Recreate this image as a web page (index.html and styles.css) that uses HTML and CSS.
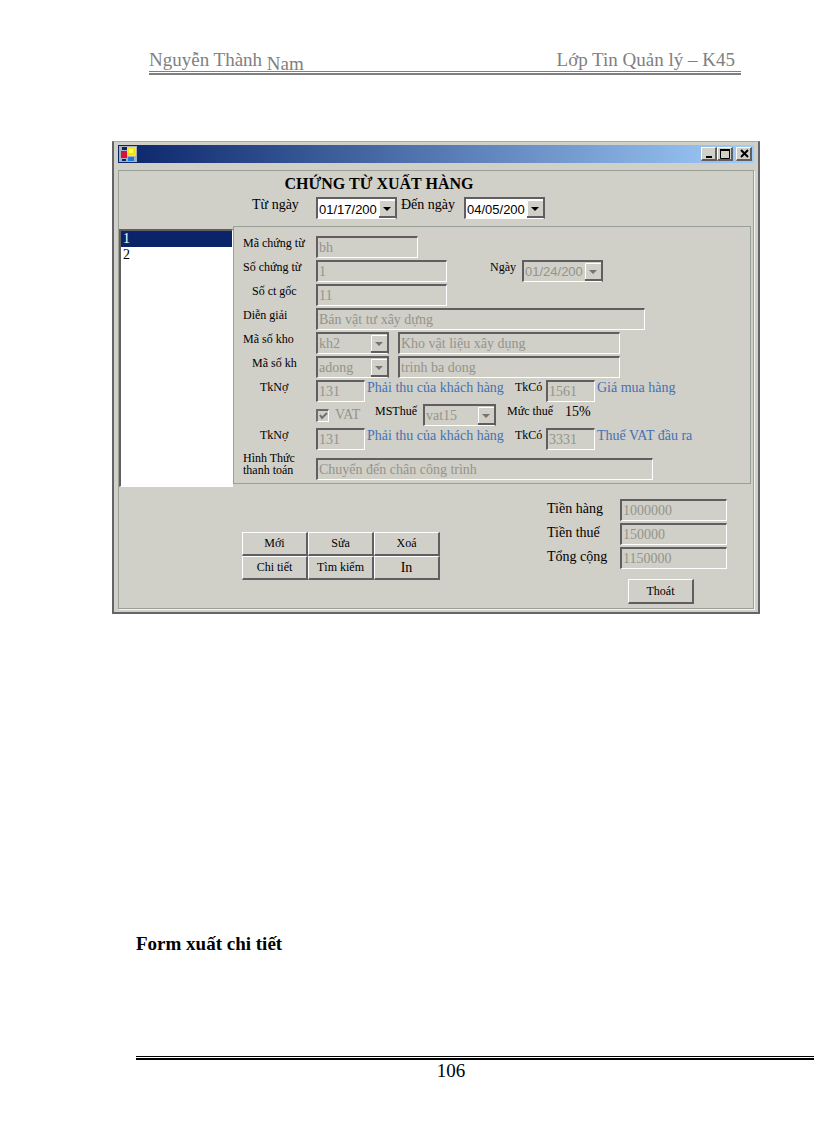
FILE: index.html
```
<!DOCTYPE html>
<html lang="vi">
<head>
    <meta charset="UTF-8">
    <meta name="viewport" content="width=device-width, initial-scale=1.0">
    <title>Chứng từ xuất hàng</title>
    <link rel="stylesheet" href="styles.css">
</head>
<body>
    <header class="page-header">
        <div class="page-header-text">
            <span>Nguyễn Thành <span class="lowered">Nam</span></span>
            <span>Lớp Tin Quản lý – K45</span>
        </div>
        <div class="rule"></div>
    </header>

    <main>
        <div class="window">
            <div class="title-bar">
                <svg class="app-icon" width="18" height="16" viewBox="0 0 18 16">
                    <rect width="18" height="16" fill="#a8b0bc"/>
                    <rect x="3" y="1" width="5" height="3" fill="#0a246a"/>
                    <rect x="8" y="1" width="9" height="9" fill="#d8d8c0"/>
                    <rect x="9" y="2" width="7" height="7" fill="#f4e410"/>
                    <rect x="10" y="3" width="4" height="4" fill="#fffc60"/>
                    <rect x="2" y="5" width="6" height="7" fill="#d8103c"/>
                    <rect x="3" y="13" width="4" height="2" fill="#0a246a"/>
                    <rect x="9" y="11" width="6" height="4" fill="#1878e8"/>
                </svg>
                <div class="window-buttons">
                    <button type="button" aria-label="Minimize"><svg width="12" height="10" viewBox="0 0 12 10"><path d="M3 8h6" stroke="#000" stroke-width="2"/></svg></button>
                    <button type="button" aria-label="Maximize"><svg width="12" height="10" viewBox="0 0 12 10"><path d="M1 1h10" stroke="#000" stroke-width="2"/><path d="M1.500 1v8.500h9v-8.500" fill="none" stroke="#000"/></svg></button>
                    <button type="button" class="close" aria-label="Close"><svg width="12" height="10" viewBox="0 0 12 10"><path d="M3 1l7 7M10 1l-7 7" stroke="#000" stroke-width="2"/></svg></button>
                </div>
            </div>

            <form class="client">
                <h1>CHỨNG TỪ XUẤT HÀNG</h1>
                <div class="date-range">
                    <label class="from" for="fromDate">Từ ngày</label>
                    <select class="date" id="fromDate"><option>01/17/200</option></select>
                    <label class="to" for="toDate">Đến ngày</label>
                    <select class="date" id="toDate"><option>04/05/200</option></select>
                </div>

                <div class="middle">
                    <select class="doc-list" size="2" aria-label="Danh sách chứng từ">
                        <option selected>1</option>
                        <option>2</option>
                    </select>

                    <div class="details">
                        <div class="row">
                            <label class="name" for="docCode">Mã chứng từ</label>
                            <input type="text" class="w-code" id="docCode" value="bh" disabled>
                        </div>
                        <div class="row">
                            <label class="name" for="docNumber">Số chứng từ</label>
                            <input type="text" class="w-number" id="docNumber" value="1" disabled>
                            <label class="day" for="docDate">Ngày</label>
                            <select class="date" id="docDate" disabled><option>01/24/200</option></select>
                        </div>
                        <div class="row">
                            <label class="name indent" for="origNumber">Số ct gốc</label>
                            <input type="text" class="w-number" id="origNumber" value="11" disabled>
                        </div>
                        <div class="row">
                            <label class="name" for="note">Diễn giải</label>
                            <input type="text" class="w-note" id="note" value="Bán vật tư xây dựng" disabled>
                        </div>
                        <div class="row">
                            <label class="name" for="store">Mã số kho</label>
                            <select class="w-select" id="store" disabled><option>kh2</option></select>
                            <input type="text" class="w-title" value="Kho vật liệu xây dụng" aria-label="Tên kho" disabled>
                        </div>
                        <div class="row">
                            <label class="name indent" for="customer">Mã số kh</label>
                            <select class="w-select" id="customer" disabled><option>adong</option></select>
                            <input type="text" class="w-title" value="trinh ba dong" aria-label="Tên khách hàng" disabled>
                        </div>
                        <div class="row">
                            <label class="name indent-more" for="debit1">TkNợ</label>
                            <input type="text" class="w-account" id="debit1" value="131" disabled>
                            <span class="account debit">Phải thu của khách hàng</span>
                            <label class="credit" for="credit1">TkCó</label>
                            <input type="text" class="w-account" id="credit1" value="1561" disabled>
                            <span class="account">Giá mua hàng</span>
                        </div>
                        <div class="row tax">
                            <label class="vat"><input type="checkbox" checked disabled>VAT</label>
                            <label class="tax-code" for="taxCode">MSThuế</label>
                            <select class="w-select" id="taxCode" disabled><option>vat15</option></select>
                            <span class="tax-rate">Mức thuế</span>
                            <span class="percent">15%</span>
                        </div>
                        <div class="row">
                            <label class="name indent-more" for="debit2">TkNợ</label>
                            <input type="text" class="w-account" id="debit2" value="131" disabled>
                            <span class="account debit">Phải thu của khách hàng</span>
                            <label class="credit" for="credit2">TkCó</label>
                            <input type="text" class="w-account" id="credit2" value="3331" disabled>
                            <span class="account">Thuế VAT đầu ra</span>
                        </div>
                        <div class="row payment">
                            <label class="name" for="payment">Hình Thức<br>thanh toán</label>
                            <input type="text" class="w-payment" id="payment" value="Chuyển đến chân công trình" disabled>
                        </div>
                    </div>
                </div>

                <div class="bottom">
                    <div class="actions">
                        <button type="button">Mới</button>
                        <button type="button">Sửa</button>
                        <button type="button">Xoá</button>
                        <button type="button">Chi tiết</button>
                        <button type="button">Tìm kiếm</button>
                        <button type="button" class="print">In</button>
                    </div>
                    <div class="totals">
                        <label for="goods">Tiền hàng</label>
                        <input type="text" id="goods" value="1000000" disabled>
                        <label for="taxSum">Tiền thuế</label>
                        <input type="text" id="taxSum" value="150000" disabled>
                        <label for="total">Tổng cộng</label>
                        <input type="text" id="total" value="1150000" disabled>
                        <button type="button" class="exit">Thoát</button>
                    </div>
                </div>
            </form>
        </div>

        <h2>Form xuất chi tiết</h2>
    </main>

    <footer class="page-footer">
        <div class="rule"></div>
        <p>106</p>
    </footer>
</body>
</html>
```
FILE: styles.css
```
* {
    box-sizing: border-box;
}
body {
    margin: 0;
    padding-top: 48px;
    background-color: #ffffff;
    color: #000000;
    font-family: "Liberation Serif", serif;
    font-size: 14px;
}

/* Page header and footer */
.page-header {
    margin: 0 75px 66px 149px;
    color: #808080;
    font-size: 19px;
}
.page-header-text {
    display: flex;
    justify-content: space-between;
    height: 23px;
    padding-right: 6px;
    line-height: 24px;
}
.lowered {
    position: relative;
    top: 4px;
}
.rule {
    height: 4px;
    border-top: 1px solid currentColor;
    border-bottom: 2px solid currentColor;
}
h2 {
    margin: 318px 0 0 136px;
    font-size: 19px;
    line-height: 24px;
}
.page-footer {
    margin: 100px 2px 0 136px;
}
.page-footer p {
    margin: 0;
    padding-right: 48px;
    font-size: 19px;
    line-height: 22px;
    text-align: center;
}

/* Window frame */
.window {
    margin: 0 56px 0 112px;
    padding: 3px 4px;
    background-color: #d0cfc8;
    border: 2px solid #64646a;
    border-top: 1px solid #a8a8a0;
}
.title-bar {
    display: flex;
    justify-content: space-between;
    align-items: center;
    height: 18px;
    padding: 0 2px 0 1px;
    background: linear-gradient(to right, #0a246a, #a0ccfa);
}
.window-buttons {
    display: flex;
}
.window-buttons button {
    display: flex;
    justify-content: center;
    align-items: center;
    width: 16px;
    height: 14px;
    padding: 0;
}
.window-buttons .close {
    margin-left: 3px;
}
.client {
    margin-top: 7px;
    border: 1px solid #98a098;
    box-shadow: 1px 1px 0 #f4f4ee;
}
h1 {
    margin: 3px 114px 0 0;
    font-size: 16px;
    line-height: 20px;
    text-align: center;
}

/* Controls */
input,
select,
button {
    margin: 0;
    font: inherit;
}
input[type="text"],
select {
    height: 22px;
    padding: 1px 1px 0 1px;
    background-color: #d0cfc8;
    border: 2px solid #605e60;
    border-right: 1px solid #ffffff;
    border-bottom: 1px solid #ffffff;
    border-radius: 0;
    color: #94948c;
    opacity: 1;
}
select {
    appearance: none;
    border-right: 2px solid #605e60;
    background-image: url("data:image/svg+xml,%3Csvg xmlns='http://www.w3.org/2000/svg' width='16' height='18'%3E%3Cpath d='M0 0h16v18H0z' fill='%23d0cfc8'/%3E%3Cpath d='M.5 18V.5H16' fill='none' stroke='%23fff'/%3E%3Cpath d='M0 17h16' fill='none' stroke='%23605e60' stroke-width='2'/%3E%3Cpath d='M4 7h8l-4 4z' fill='%23747474'/%3E%3C/svg%3E");
    background-position: right center;
    background-repeat: no-repeat;
}
button {
    background-color: #d0cfc8;
    border: 1px solid #ffffff;
    border-right: 2px solid #605e60;
    border-bottom: 2px solid #605e60;
    color: #000000;
}

.date-range {
    display: flex;
    padding: 3px 0 0 133px;
}
.date-range select {
    background-color: #ffffff;
    color: #000000;
    background-image: url("data:image/svg+xml,%3Csvg xmlns='http://www.w3.org/2000/svg' width='16' height='18'%3E%3Cpath d='M0 0h16v18H0z' fill='%23d0cfc8'/%3E%3Cpath d='M.5 18V.5H16' fill='none' stroke='%23fff'/%3E%3Cpath d='M0 17h16' fill='none' stroke='%23605e60' stroke-width='2'/%3E%3Cpath d='M4 7h8l-4 4z' fill='%23000'/%3E%3C/svg%3E");
}
.date-range label {
    line-height: 16px;
}
.from {
    width: 64px;
}
.to {
    width: 67px;
    padding-left: 4px;
}

/* Document list and detail panel */
.middle {
    display: flex;
    align-items: flex-start;
    margin: 7px 2px 0 0;
}
select.doc-list {
    width: 114px;
    height: 258px;
    margin-top: 3px;
    padding: 0;
    background-color: #ffffff;
    background-image: none;
    border-right: 1px solid #ffffff;
    color: #000000;
    overflow: hidden;
}
.doc-list option {
    min-height: 15px;
    padding: 0 2px;
    line-height: 15px;
}
.doc-list option:checked {
    background: linear-gradient(#0a246a, #0a246a);
    color: #ffffff;
}
.details {
    flex: 1;
    height: 258px;
    padding: 9px 0 0 9px;
    border: 1px solid #98a098;
}
.row {
    display: flex;
    height: 22px;
    margin-bottom: 2px;
    font-size: 12px;
    line-height: 14px;
    white-space: nowrap;
}
.row input,
.row select {
    font-size: 14px;
}
.client select.date {
    width: 81px;
    font-family: "Liberation Sans", sans-serif;
    font-size: 13px;
}
.name {
    width: 73px;
}
.indent {
    padding-left: 9px;
}
.indent-more {
    padding-left: 17px;
}
.w-code {
    width: 102px;
}
.w-number {
    width: 131px;
}
.w-note {
    width: 329px;
}
.w-select {
    width: 73px;
}
.w-title {
    width: 222px;
    margin-left: 9px;
}
.w-account {
    width: 49px;
}
.w-payment {
    width: 337px;
}
.day {
    width: 75px;
    padding-left: 43px;
}
.account {
    padding-left: 2px;
    color: #4472b4;
    font-size: 14px;
    line-height: 16px;
}
.debit {
    width: 150px;
}
.credit {
    width: 31px;
}
.tax {
    padding-left: 73px;
}
.vat {
    display: flex;
    align-items: center;
    gap: 6px;
    width: 59px;
    color: #94948c;
    font-size: 14px;
}
.vat input {
    appearance: none;
    width: 13px;
    height: 13px;
    border: 2px solid #6c6c6c;
    border-right: 1px solid #ffffff;
    border-bottom: 1px solid #ffffff;
    background: url("data:image/svg+xml,%3Csvg xmlns='http://www.w3.org/2000/svg' width='10' height='10'%3E%3Cpath d='M2 4l2 3 5-5' fill='none' stroke='%23707070' stroke-width='2'/%3E%3C/svg%3E") no-repeat center;
}
.tax-code {
    width: 48px;
}
.tax-rate {
    width: 69px;
    padding-left: 11px;
}
.percent {
    font-size: 14px;
    line-height: 16px;
}
.payment {
    margin-top: 8px;
    line-height: 12px;
}
.payment label {
    margin-top: -6px;
}

/* Buttons and totals */
.bottom {
    display: flex;
    justify-content: space-between;
    padding: 12px 26px 4px 123px;
}
.actions {
    display: grid;
    grid-template-columns: repeat(3, 66px);
    grid-auto-rows: 24px;
    margin-top: 33px;
}
.actions button,
.exit {
    padding: 0;
    font-size: 12px;
}
.actions .print {
    font-size: 14px;
}
.totals {
    display: grid;
    grid-template-columns: 73px 107px;
    row-gap: 2px;
}
.totals label {
    font-size: 14px;
    line-height: 20px;
}
.exit {
    grid-column: 2;
    width: 66px;
    height: 25px;
    margin: 8px 0 0 8px;
}
```
